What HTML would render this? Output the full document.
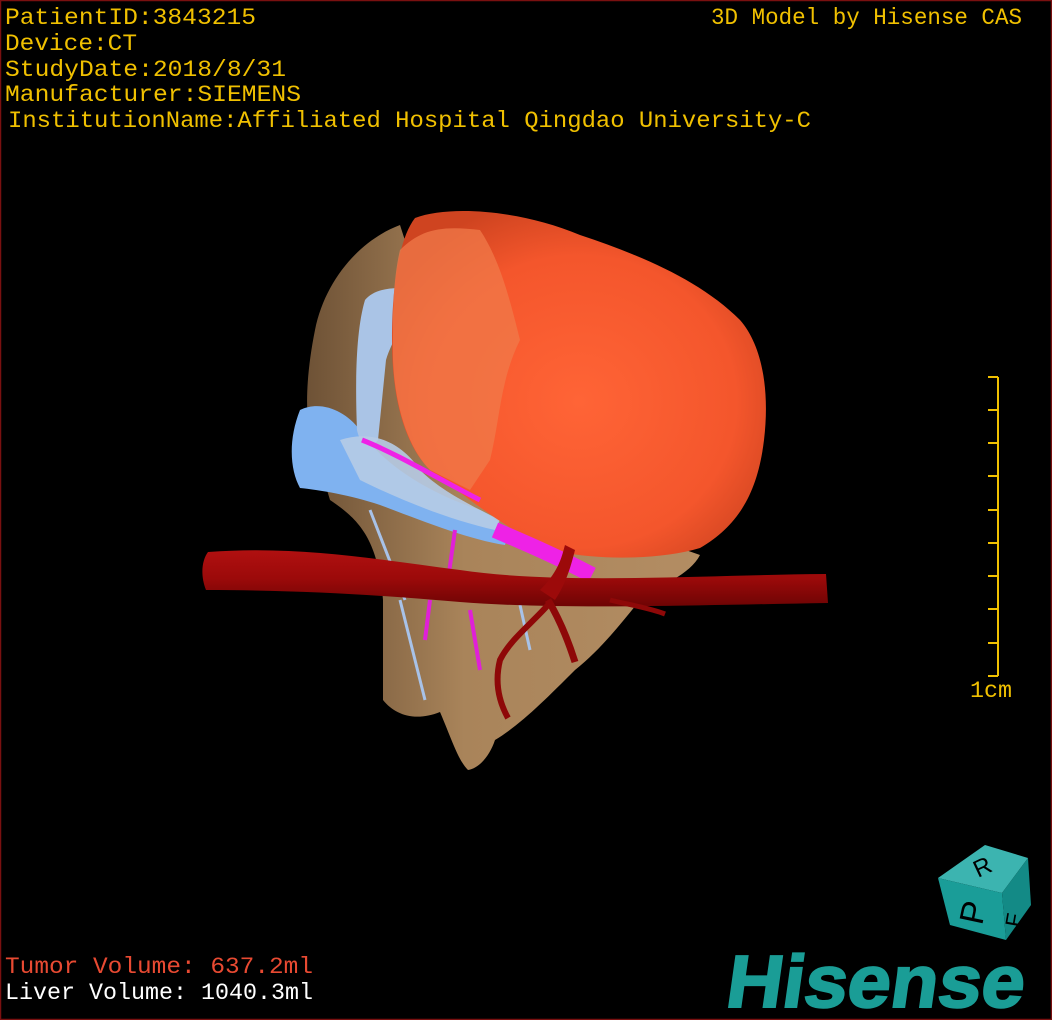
<!DOCTYPE html>
<html><head><meta charset="utf-8"><style>
html,body{margin:0;padding:0;background:#000;}
svg{display:block}
</style></head><body>
<svg width="1052" height="1020" viewBox="0 0 1052 1020" xmlns="http://www.w3.org/2000/svg">
<defs>
<radialGradient id="tg" cx="0.5" cy="0.55" r="0.6">
<stop offset="0" stop-color="#ff6436"/><stop offset="0.7" stop-color="#f4562c"/><stop offset="1" stop-color="#cf4420"/>
</radialGradient>
<linearGradient id="lg" x1="0" y1="0" x2="1" y2="0">
<stop offset="0" stop-color="#6e5236"/><stop offset="0.4" stop-color="#a9845a"/><stop offset="1" stop-color="#b38d63"/>
</linearGradient>
<linearGradient id="ag" x1="0" y1="0" x2="0" y2="1">
<stop offset="0" stop-color="#b01010"/><stop offset="0.5" stop-color="#9c0a0a"/><stop offset="1" stop-color="#6e0404"/>
</linearGradient>
</defs>
<rect x="0.5" y="0.5" width="1051" height="1019" fill="#000" stroke="#7a1010" stroke-width="1.5"/>
<!-- liver -->
<path d="M400 225 C360 240 325 280 315 330 C305 380 305 420 312 440 L330 500 C360 520 378 540 383 600 L383 700 C395 715 415 722 440 712 C452 740 458 760 468 770 C480 768 490 755 495 740 C520 725 545 700 575 670 C600 650 620 625 640 600 C660 585 690 575 700 555 L600 520 L450 380 Z" fill="url(#lg)"/>
<!-- blue veins -->
<path d="M300 410 C320 400 345 410 360 430 C380 460 420 490 480 510 C500 520 510 530 505 545 C470 540 420 520 380 505 C350 495 320 490 300 488 C290 470 288 440 300 410 Z" fill="#7fb2f0"/>
<path d="M365 300 C375 288 395 286 420 290 C430 295 432 300 420 310 C405 320 392 340 386 360 L378 440 C370 450 360 445 357 430 C355 380 356 330 365 300 Z" fill="#aac4e6"/>
<path d="M420 295 C435 300 445 330 448 350 L440 352 C432 330 425 310 410 302 Z" fill="#aac4e6"/>
<path d="M340 440 C370 430 400 440 420 470 C440 490 470 505 500 520 L495 530 C450 520 400 500 360 480 Z" fill="#b6cbe6" opacity="0.9"/>
<path d="M400 600 L425 700 M520 605 L530 650 M370 510 L405 600" stroke="#a8c2e8" stroke-width="3" fill="none"/>
<!-- tumor -->
<path d="M415 218 C450 205 520 210 580 235 C640 255 700 280 740 320 C762 345 770 390 764 440 C758 490 740 525 700 548 C660 560 600 560 560 552 C520 540 470 500 430 470 C405 445 392 400 392 340 C392 290 398 240 415 218 Z" fill="url(#tg)"/>
<path d="M400 250 C420 230 440 225 480 230 C500 260 510 300 520 340 C500 380 500 420 490 460 L470 490 L430 470 C410 450 395 410 393 360 C392 310 394 275 400 250 Z" fill="#f07a4a" opacity="0.75"/>
<!-- magenta -->
<path d="M362 440 C400 455 440 480 480 500" stroke="#ee22e6" stroke-width="5" fill="none"/>
<path d="M495 530 C530 545 560 558 592 575" stroke="#ee22e6" stroke-width="16" fill="none"/>
<path d="M455 530 L448 580 M470 610 L480 670 M430 600 L425 640" stroke="#e020d8" stroke-width="4" fill="none"/>
<!-- aorta -->
<path d="M208 552 C300 545 380 560 460 570 C560 585 700 575 826 574 L828 603 C700 605 560 610 460 602 C380 595 300 590 206 590 C200 575 202 560 208 552 Z" fill="url(#ag)"/>
<path d="M540 590 C560 570 562 555 565 545 L575 550 C570 570 565 585 555 600 Z" fill="#9c0a0a"/>
<path d="M548 605 C530 625 510 640 500 660 C495 680 498 700 508 718" stroke="#8e0808" stroke-width="6" fill="none"/>
<path d="M548 600 C560 620 568 640 575 662" stroke="#8e0808" stroke-width="7" fill="none"/>
<path d="M610 600 C630 605 650 608 665 614" stroke="#8e0808" stroke-width="5" fill="none"/>
<!-- scale bar -->
<g stroke="#f0c000" stroke-width="2">
<line x1="998" y1="377" x2="998" y2="676"/>
<line x1="988" y1="377" x2="998" y2="377"/><line x1="988" y1="410" x2="998" y2="410"/><line x1="988" y1="443" x2="998" y2="443"/><line x1="988" y1="476" x2="998" y2="476"/><line x1="988" y1="510" x2="998" y2="510"/><line x1="988" y1="543" x2="998" y2="543"/><line x1="988" y1="576" x2="998" y2="576"/><line x1="988" y1="609" x2="998" y2="609"/><line x1="988" y1="643" x2="998" y2="643"/><line x1="988" y1="676" x2="998" y2="676"/>
</g>
<g font-family="Liberation Mono, monospace" font-size="23" fill="#f0c000">
<text x="5" y="24" textLength="251" lengthAdjust="spacingAndGlyphs">PatientID:3843215</text>
<text x="5" y="50" textLength="132" lengthAdjust="spacingAndGlyphs">Device:CT</text>
<text x="5" y="76" textLength="281" lengthAdjust="spacingAndGlyphs">StudyDate:2018/8/31</text>
<text x="5" y="101" textLength="296" lengthAdjust="spacingAndGlyphs">Manufacturer:SIEMENS</text>
<text x="8" y="127" textLength="803" lengthAdjust="spacingAndGlyphs">InstitutionName:Affiliated Hospital Qingdao University-C</text>
<text x="711" y="24" textLength="311" lengthAdjust="spacingAndGlyphs">3D Model by Hisense CAS</text>
<text x="970" y="697" textLength="42" lengthAdjust="spacingAndGlyphs">1cm</text>
<text x="5" y="973" fill="#e84a32" textLength="308" lengthAdjust="spacingAndGlyphs">Tumor Volume:  637.2ml</text>
<text x="5" y="999" fill="#ffffff" textLength="308" lengthAdjust="spacingAndGlyphs">Liver Volume: 1040.3ml</text>
</g>
<!-- cube -->
<polygon points="938,878 985,845 1028,858 1002,893" fill="#3cb4b0"/>
<polygon points="938,878 1002,893 1006,940 950,925" fill="#1a9d98"/>
<polygon points="1002,893 1028,858 1031,905 1006,940" fill="#138a86"/>
<text x="0" y="0" transform="translate(982,926) rotate(-78)" font-family="Liberation Sans, sans-serif" font-size="34" fill="#000">P</text>
<text x="0" y="0" transform="translate(978,878) rotate(-25)" font-family="Liberation Sans, sans-serif" font-size="24" fill="#000">R</text>
<text x="0" y="0" transform="translate(1020,928) rotate(-80)" font-family="Liberation Sans, sans-serif" font-size="22" fill="#000">F</text>
<text x="0" y="0" transform="translate(724,1007) skewX(-8)" font-family="Liberation Sans, sans-serif" font-weight="bold" font-size="74" fill="#1a9d96" stroke="#1a9d96" stroke-width="2" textLength="298" lengthAdjust="spacingAndGlyphs">Hisense</text>
</svg>
</body></html>
